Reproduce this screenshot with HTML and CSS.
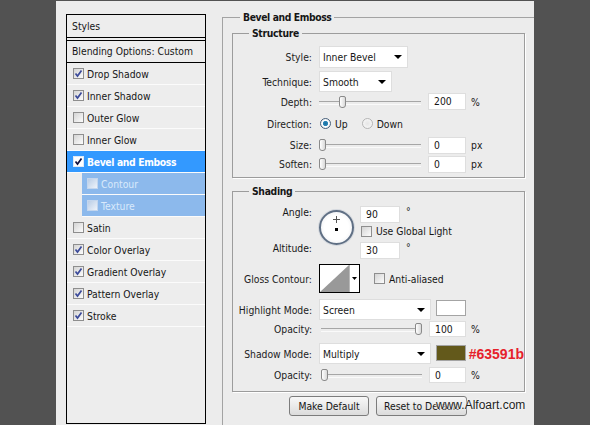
FILE: index.html
```html
<!DOCTYPE html>
<html>
<head>
<meta charset="utf-8">
<link rel="stylesheet" href="styles.css">
</head>
<body>
<div class="dialog">
  <div class="styles-list">
    <div class="list-head">Styles</div>
    <div class="list-blend">Blending Options: Custom</div>
    <div class="list-row"><span class="cb"><svg viewBox="0 0 9 9"><path d="M1.5 4.5 L3.5 7 L7.5 1.5"/></svg></span>Drop Shadow</div>
    <div class="list-row"><span class="cb"><svg viewBox="0 0 9 9"><path d="M1.5 4.5 L3.5 7 L7.5 1.5"/></svg></span>Inner Shadow</div>
    <div class="list-row"><span class="cb"></span>Outer Glow</div>
    <div class="list-row"><span class="cb"></span>Inner Glow</div>
    <div class="list-row sel"><span class="cb"><svg viewBox="0 0 9 9"><path d="M1.5 4.5 L3.5 7 L7.5 1.5"/></svg></span>Bevel and Emboss</div>
    <div class="list-row sub"><span class="cb"></span>Contour</div>
    <div class="list-row sub"><span class="cb"></span>Texture</div>
    <div class="list-row"><span class="cb"></span>Satin</div>
    <div class="list-row"><span class="cb"><svg viewBox="0 0 9 9"><path d="M1.5 4.5 L3.5 7 L7.5 1.5"/></svg></span>Color Overlay</div>
    <div class="list-row"><span class="cb"><svg viewBox="0 0 9 9"><path d="M1.5 4.5 L3.5 7 L7.5 1.5"/></svg></span>Gradient Overlay</div>
    <div class="list-row"><span class="cb"><svg viewBox="0 0 9 9"><path d="M1.5 4.5 L3.5 7 L7.5 1.5"/></svg></span>Pattern Overlay</div>
    <div class="list-row"><span class="cb"><svg viewBox="0 0 9 9"><path d="M1.5 4.5 L3.5 7 L7.5 1.5"/></svg></span>Stroke</div>
  </div>

  <fieldset class="group">
    <legend class="group-title">Bevel and Emboss</legend>

    <fieldset class="box structure">
      <legend class="box-title">Structure</legend>
      <div class="row r-style">
        <span class="lbl">Style:</span>
        <div class="select w-style">Inner Bevel<i class="arrow"></i></div>
      </div>
      <div class="row r-tech">
        <span class="lbl">Technique:</span>
        <div class="select w-tech">Smooth<i class="arrow"></i></div>
      </div>
      <div class="row r-depth">
        <span class="lbl">Depth:</span>
        <div class="slider"><span class="thumb" style="left:20px"></span></div>
        <div class="num">200</div><span class="unit">%</span>
      </div>
      <div class="row r-dir">
        <span class="lbl">Direction:</span>
        <span class="radio on"></span><span class="rtext">Up</span>
        <span class="radio off"></span><span class="rtext">Down</span>
      </div>
      <div class="row r-size">
        <span class="lbl">Size:</span>
        <div class="slider"><span class="thumb" style="left:0px"></span></div>
        <div class="num">0</div><span class="unit">px</span>
      </div>
      <div class="row r-soften">
        <span class="lbl">Soften:</span>
        <div class="slider"><span class="thumb" style="left:0px"></span></div>
        <div class="num">0</div><span class="unit">px</span>
      </div>
    </fieldset>

    <fieldset class="box shading">
      <legend class="box-title">Shading</legend>
      <div class="angle">
        <div class="lbls"><span>Angle:</span><span>Altitude:</span></div>
        <div class="dial"><span class="cross"></span><span class="dot"></span></div>
        <div class="vals">
          <div class="val-row"><div class="num sm">90</div><span class="deg">°</span></div>
          <div class="chk-row"><span class="cb"></span>Use Global Light</div>
          <div class="val-row alt"><div class="num sm">30</div><span class="deg">°</span></div>
        </div>
      </div>
      <div class="row r-gloss">
        <span class="lbl">Gloss Contour:</span>
        <svg class="contour" width="41" height="29" viewBox="0 0 41 29">
          <rect x="0.5" y="0.5" width="40" height="28" fill="#fff" stroke="#000"/>
          <polygon points="1,28 30,1 30,28" fill="#999"/>
          <line x1="30.5" y1="1" x2="30.5" y2="28" stroke="#b8b8b8"/>
          <polygon points="33,13 38,13 35.5,16" fill="#000"/>
        </svg>
        <span class="cb aa"></span><span class="ctext">Anti-aliased</span>
      </div>
      <div class="row r-hl">
        <span class="lbl">Highlight Mode:</span>
        <div class="select w-mode">Screen<i class="arrow"></i></div>
        <span class="swatch white"></span>
      </div>
      <div class="row r-op1">
        <span class="lbl">Opacity:</span>
        <div class="slider wide"><span class="thumb" style="left:94px"></span></div>
        <div class="num op">100</div><span class="unit">%</span>
      </div>
      <div class="row r-sh">
        <span class="lbl">Shadow Mode:</span>
        <div class="select w-mode">Multiply<i class="arrow"></i></div>
        <span class="swatch olive"></span>
        <span class="hex">#63591b</span>
      </div>
      <div class="row r-op2">
        <span class="lbl">Opacity:</span>
        <div class="slider wide"><span class="thumb" style="left:0px"></span></div>
        <div class="num op">0</div><span class="unit">%</span>
      </div>
    </fieldset>

    <div class="buttons">
      <div class="btn b-make">Make Default</div>
      <div class="btn b-reset">Reset to Default</div>
    </div>
  </fieldset>
</div>
<div class="watermark">www.Alfoart.com</div>
</body>
</html>
```

FILE: styles.css
```css
* { box-sizing: border-box; }
html, body { margin: 0; padding: 0; }
body {
  width: 590px;
  height: 425px;
  overflow: hidden;
  background: #525252;
  padding-top: 1px;
  position: relative;
  font-family: "DejaVu Sans Condensed", "Liberation Sans", Arial, sans-serif;
  font-size: 10.3px;
  color: #161616;
}

.dialog {
  margin-left: 56px;
  width: 478px;
  height: 424px;
  background: #ececec;
  display: flex;
  align-items: flex-start;
  overflow: hidden;
}

/* ---------- styles list ---------- */
.styles-list {
  margin: 13px 0 0 10px;
  width: 140px;
  height: 410px;
  flex: none;
  border: 1px solid #000;
  background: #ededed;
}
.list-head {
  height: 23px;
  line-height: 22px;
  padding-left: 5px;
  border-bottom: 1px solid #000;
  margin-bottom: 2px;
}
.list-blend {
  height: 23px;
  line-height: 21px;
  padding-left: 5px;
  border-top: 1px solid #000;
  border-bottom: 1px solid #000;
}
.list-row {
  height: 22px;
  display: flex;
  align-items: center;
  gap: 3px;
  padding-left: 6px;
  border-bottom: 1px solid #fbfbfb;
}
.list-row.sel {
  background: #3399ff;
  color: #fff;
  font-weight: bold;
  letter-spacing: -0.35px;
}
.list-row.sub {
  margin-left: 15px;
  padding-left: 5px;
  background: #8cb9ec;
  color: #d9e9fb;
}

.cb {
  width: 11px;
  height: 11px;
  flex: none;
  display: inline-flex;
  align-items: center;
  justify-content: center;
  border: 1px solid #8e8e8e;
  background: linear-gradient(135deg, #d4d4d4, #fcfcfc);
}
.cb svg { width: 9px; height: 9px; }
.cb path { fill: none; stroke: #3b4a9a; stroke-width: 1.7; }
.sel .cb { background: #fff; border-color: #dfe9f5; }
.sel .cb path { stroke: #101040; }
.sub .cb { border-color: #c3d6ee; background: linear-gradient(135deg, #b9cde6, #eef3fa); }

/* ---------- right group ---------- */
.group {
  margin: 10px 0 0 16px;
  padding: 3px 0 20px 9px;
  width: 312px;
  height: 420px;
  min-width: 0;
  flex: none;
  border: none;
  border-top: 1px solid #a3a3a3;
  border-left: 1px solid #a3a3a3;
}
.group-title {
  margin-left: 8px;
  padding: 0 3px;
  font-weight: bold;
  letter-spacing: -0.4px;
  line-height: 13px;
}
.box {
  margin: 0;
  padding: 0 0 4px 0;
  width: 293px;
  min-width: 0;
  border: 1px solid #9c9c9c;
  box-shadow: 1px 1px 0 #fff;
}
.box-title {
  margin-left: 16px;
  padding: 0 3px;
  font-weight: bold;
  letter-spacing: -0.3px;
  line-height: 13px;
}
.shading { margin-top: 7px; padding-bottom: 8px; }

.row { display: flex; align-items: center; }
.lbl {
  width: 79px;
  margin-right: 6px;
  flex: none;
  text-align: right;
  color: #1c1c1c;
}

.select {
  position: relative;
  margin-left: 1px;
  height: 100%;
  display: flex;
  align-items: center;
  padding-left: 3px;
  background: #fff;
  border: 1px solid #dedede;
}
.arrow {
  position: absolute;
  right: 5px;
  top: 50%;
  margin-top: -2px;
  width: 0;
  height: 0;
  border-left: 4px solid transparent;
  border-right: 4px solid transparent;
  border-top: 4px solid #000;
}
.w-style { width: 89px; }
.w-tech { width: 73px; }
.w-mode { width: 112px; }

.r-style { margin-top: 6px; height: 22px; }
.r-tech { margin-top: 3px; height: 21px; }
.r-depth { height: 19px; }
.r-dir { height: 25px; }
.r-size { height: 18px; }
.r-soften { margin-top: 1px; height: 18px; }

.slider {
  position: relative;
  margin-left: 1px;
  margin-right: 7px;
  width: 102px;
  height: 12px;
  flex: none;
}
.slider::before {
  content: "";
  position: absolute;
  left: 0;
  right: 0;
  top: 5px;
  height: 2px;
  border-top: 1px solid #a6a6a6;
  border-bottom: 1px solid #fafafa;
}
.slider.wide { margin-left: 3px; width: 101px; }
.thumb {
  position: absolute;
  top: 0;
  width: 7px;
  height: 12px;
  border: 1px solid #8a8a8a;
  border-radius: 2px 2px 3px 3px;
  background: linear-gradient(90deg, #ffffff, #d9d9d9);
}

.num {
  width: 38px;
  height: 17px;
  flex: none;
  padding-left: 5px;
  line-height: 15px;
  background: #fff;
  border: 1px solid #dedede;
}
.num.op { width: 37px; height: 16px; line-height: 14px; }
.unit { margin-left: 5px; }

.radio {
  width: 11px;
  height: 11px;
  flex: none;
  border-radius: 50%;
}
.radio.on {
  margin-left: 2px;
  border: 1px solid #48607a;
  background: radial-gradient(circle, #1b6d9e 0, #2a86b8 2.2px, #ffffff 3px, #e9eef3 5px);
}
.radio.off {
  margin-left: 14px;
  border: 1px solid #b5b5b5;
  background: radial-gradient(circle, #e6e6e6, #fafafa);
}
.rtext { margin-left: 4px; }

/* shading */
.angle { display: flex; margin-top: 8px; height: 53px; }
.lbls {
  width: 79px;
  margin-right: 6px;
  flex: none;
  display: flex;
  flex-direction: column;
  justify-content: space-between;
  text-align: right;
  padding-bottom: 4px;
  line-height: 13px;
}
.dial {
  position: relative;
  align-self: flex-start;
  margin-top: 4px;
  margin-left: 1px;
  width: 35px;
  height: 35px;
  flex: none;
  border-radius: 50%;
  border: 2px solid #5f6f84;
  background: radial-gradient(circle, #ffffff 55%, #e4e6ea);
  box-shadow: 0 0 0 1px #d4d8de;
}
.dot {
  position: absolute;
  left: 14px;
  top: 16px;
  width: 3px;
  height: 3px;
  background: #000;
}
.cross {
  position: absolute;
  left: 12px;
  top: 4px;
  width: 7px;
  height: 7px;
  background:
    linear-gradient(#555, #555) center / 1px 7px no-repeat,
    linear-gradient(#555, #555) center / 7px 1px no-repeat;
}
.vals { margin-left: 6px; display: flex; flex-direction: column; }
.val-row { display: flex; align-items: flex-start; }
.val-row.alt { margin-top: 5px; }
.num.sm { width: 40px; }
.deg { margin-left: 6px; line-height: 11px; }
.chk-row {
  display: flex;
  align-items: center;
  gap: 4px;
  height: 12px;
  margin-top: 2px;
  margin-left: 1px;
}

.r-gloss { margin-top: 5px; height: 29px; }
.contour { margin-left: 1px; flex: none; }
.cb.aa { margin-left: 14px; }
.ctext { margin-left: 4px; }

.r-hl { margin-top: 6px; height: 21px; }
.r-op1 { height: 18px; }
.r-sh { margin-top: 5px; height: 21px; }
.r-op2 { margin-top: 2px; height: 17px; }

.swatch {
  align-self: flex-start;
  margin-left: 5px;
  margin-top: 1px;
  width: 30px;
  height: 16px;
  flex: none;
  border: 1px solid #a4a4a4;
}
.swatch.white { background: #fff; }
.swatch.olive { background: #63591b; margin-top: 2px; }
.hex {
  margin-left: 3px;
  font-family: "Liberation Sans", Arial, sans-serif;
  font-weight: bold;
  font-size: 14px;
  color: #e6212b;
}

.buttons {
  display: flex;
  gap: 7px;
  margin-top: 4px;
  margin-left: 57px;
}
.btn {
  height: 20px;
  display: flex;
  align-items: center;
  justify-content: center;
  border: 1px solid #7c7c7c;
  border-radius: 3px;
  background: linear-gradient(#f8f8f8, #dcdcdc);
}
.b-make { width: 80px; }
.b-reset { width: 91px; }

.watermark {
  position: absolute;
  left: 436px;
  top: 398px;
  font-family: "Liberation Sans", Arial, sans-serif;
  font-size: 12px;
  color: #1e1e1e;
  text-shadow: 0 0 2px #f4f4f4, 0 0 2px #f4f4f4, 0 0 3px #f4f4f4;
}
```
